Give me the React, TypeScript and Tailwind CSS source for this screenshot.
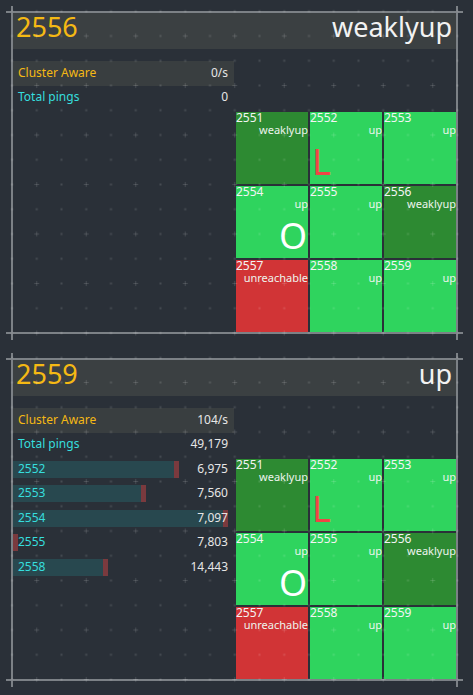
import React from "react";

type Tile = { id: string; status: string; kind: "dark" | "up" | "red"; mark?: "L" | "O" };
type Bar = { id: string; value: string; w: number };

const tiles: Tile[] = [
  { id: "2551", status: "weaklyup", kind: "dark" },
  { id: "2552", status: "up", kind: "up", mark: "L" },
  { id: "2553", status: "up", kind: "up" },
  { id: "2554", status: "up", kind: "up", mark: "O" },
  { id: "2555", status: "up", kind: "up" },
  { id: "2556", status: "weaklyup", kind: "dark" },
  { id: "2557", status: "unreachable", kind: "red" },
  { id: "2558", status: "up", kind: "up" },
  { id: "2559", status: "up", kind: "up" },
];

const kindClass: Record<Tile["kind"], string> = {
  dark: "bg-[#2d8a32]",
  up: "bg-[#2fd45e]",
  red: "bg-[#d13436]",
};

function TileBox({ t }: { t: Tile }) {
  return (
    <div className={`relative flex h-[72px] w-[72px] flex-col ${kindClass[t.kind]}`}>
      <div className="text-[12px] leading-[12px] text-[#f4f4f4]">{t.id}</div>
      <div className="text-right text-[11px] leading-[12px] text-[#eef4ee]">{t.status}</div>
      {t.mark === "L" && (
        <div className="absolute bottom-[4px] left-[2px] text-[36px] leading-[36px] text-[#f04545]">L</div>
      )}
      {t.mark === "O" && (
        <div className="absolute bottom-[4px] right-[1px] text-[36px] leading-[36px] text-white">O</div>
      )}
    </div>
  );
}

function Panel({
  title,
  status,
  rate,
  pings,
  bars,
}: {
  title: string;
  status: string;
  rate: string;
  pings: string;
  bars: Bar[];
}) {
  return (
    <div className="relative flex h-[323px] w-[447px] flex-col p-[2px]">
      <div className="absolute left-[-5px] right-[-5px] top-0 h-[2px] bg-[#7c8186]" />
      <div className="absolute bottom-0 left-[-5px] right-[-5px] h-[2px] bg-[#7c8186]" />
      <div className="absolute bottom-[-6px] left-0 top-[-5px] w-[2px] bg-[#7c8186]" />
      <div className="absolute bottom-[-6px] right-0 top-[-5px] w-[2px] bg-[#7c8186]" />

      <div className="flex h-[36px] items-start justify-between bg-[#3b4042] pl-[3px] pr-[4px] text-[27px] leading-[27px]">
        <span className="text-[#f5b914]">{title}</span>
        <span className="text-[#f2f2f2]">{status}</span>
      </div>

      <div className="flex flex-1">
        <div className="flex w-[223px] flex-col pt-[12px] text-[12px]">
          <div className="mr-[2px] flex h-[24.5px] items-center justify-between bg-[#393e40] pb-[1px] pl-[5px] pr-[6px]">
            <span className="text-[#f5b914]">Cluster Aware</span>
            <span className="text-[#e6e6e6]">{rate}</span>
          </div>
          <div className="flex h-[24.5px] items-center justify-between pb-[1px] pl-[5px] pr-[8px]">
            <span className="text-[#36dede]">Total pings</span>
            <span className="text-[#e6e6e6]">{pings}</span>
          </div>
          {bars.map((b) => (
            <div key={b.id} className="relative flex h-[24.5px] items-center justify-between pb-[1px] pl-[5px] pr-[8px]">
              <div
                className="absolute left-0 top-[3.5px] flex h-[17px] justify-end bg-[#28484f]"
                style={{ width: b.w }}
              >
                <div className="h-full w-[5px] bg-[#7a3a3e]" />
              </div>
              <span className="relative text-[#36dede]">{b.id}</span>
              <span className="relative text-[#e6e6e6]">{b.value}</span>
            </div>
          ))}
        </div>
        <div className="grid w-[220px] grid-cols-[72px_72px_72px] gap-[2px] self-end">
          {tiles.map((t) => (
            <TileBox key={t.id} t={t} />
          ))}
        </div>
      </div>
    </div>
  );
}

export default function App() {
  return (
    <div
      className="relative flex min-h-[695px] w-[473px] flex-col gap-[24px] overflow-hidden bg-[#2a3038] pl-[11px] pt-[11px]"
      style={{ fontFamily: '"Noto Sans", "Open Sans", sans-serif' }}
    >
      <Panel title="2556" status="weaklyup" rate="0/s" pings="0" bars={[]} />
      <Panel
        title="2559"
        status="up"
        rate="104/s"
        pings="49,179"
        bars={[
          { id: "2552", value: "6,975", w: 166 },
          { id: "2553", value: "7,560", w: 133 },
          { id: "2554", value: "7,097", w: 215 },
          { id: "2555", value: "7,803", w: 5 },
          { id: "2558", value: "14,443", w: 95 },
        ]}
      />
      <svg className="pointer-events-none absolute left-0 top-0" width="473" height="695">
        <defs>
          <pattern id="bggrid" x="-0.375" y="-1.125" width="49.5" height="49.5" patternUnits="userSpaceOnUse">
            <g fill="#ffffff" fillOpacity="0.13">
              <rect x="11.375" y="11.375" width="2" height="2" />
              <rect x="36.125" y="11.375" width="2" height="2" />
              <rect x="11.375" y="36.125" width="2" height="2" />
              <rect x="34.625" y="36.625" width="5" height="1" />
              <rect x="36.625" y="34.625" width="1" height="5" />
            </g>
          </pattern>
        </defs>
        <rect width="473" height="695" fill="url(#bggrid)" />
      </svg>
    </div>
  );
}
